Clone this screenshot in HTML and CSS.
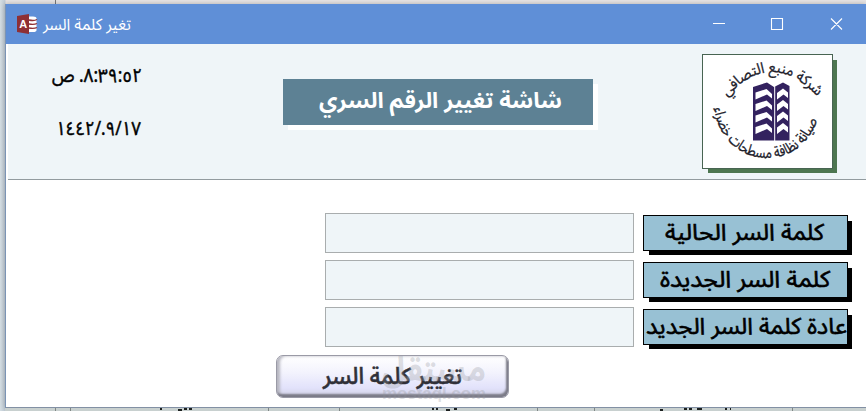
FILE: index.html
```
<!DOCTYPE html>
<html lang="ar">
<head>
    <meta charset="UTF-8">
    <meta name="viewport" content="width=device-width, initial-scale=1.0">
    <title>تغير كلمة السر</title>
    <link rel="stylesheet" href="styles.css">
</head>
<body>
    <div class="window">
        <div class="titlebar">
            <svg class="app-icon" width="20" height="20" viewBox="0 0 20 20">
                <path d="M0 2L12 0V20L0 18Z" fill="#8e3035"/>
                <text x="2.2" y="14" class="app-letter">A</text>
                <path d="M12 2.500H16Q19.500 2.500 19.500 4.500V16Q19.500 18 16 18H12Z" fill="#fff"/>
                <path d="M12 6Q17 7.200 20 5.500M12 10Q17 11 20 9.500M12 14Q17 15 20 13.500" fill="none" stroke="#8e3035" stroke-width="1.300"/>
            </svg>
            <svg class="title" width="90" height="32"><text x="0" y="22" textLength="88" lengthAdjust="spacingAndGlyphs">تغير كلمة السر</text></svg>
            <svg class="controls" width="134" height="16" viewBox="0 0 134 16">
                <path d="M1 7.500H13M59.500 2.500H70.500V13.500H59.500ZM119 2.500L130 13.500M130 2.500L119 13.500" fill="none" stroke="#fff" stroke-width="1.100"/>
            </svg>
        </div>
        <div class="header">
            <div class="clock">
                <svg width="100" height="34"><text x="1" y="21" textLength="90" lengthAdjust="spacingAndGlyphs">ص .٨:٣٩:٥٢</text></svg>
                <svg width="100" height="34"><text x="5" y="21" textLength="85" lengthAdjust="spacingAndGlyphs">١٤٤٢/.٩/١٧</text></svg>
            </div>
            <div class="banner">
                <svg width="310" height="46"><text x="36" y="29" textLength="243" lengthAdjust="spacingAndGlyphs">شاشة تغيير الرقم السري</text></svg>
            </div>
            <div class="logo">
                <svg width="129" height="113" viewBox="703 55 129 113">
                    <path id="top-arc" d="M727 97Q770 48 816 95" fill="none"/>
                    <path id="bottom-arc" d="M714 108C724 175 812 175 820 106" fill="none"/>
                    <text class="logo-text"><textPath href="#top-arc" textLength="106" lengthAdjust="spacingAndGlyphs">شركة منبع التصافي</textPath></text>
                    <text class="logo-text"><textPath href="#bottom-arc" textLength="147" lengthAdjust="spacingAndGlyphs">صيانة نظافة مسطحات خضراء</textPath></text>
                    <path d="M753 87L767 82.500L774 87L783 82.500L789.500 86V140.500H753Z" fill="#33225f"/>
                    <g fill="#fff">
                        <path id="pane" d="M755.500 92.500L766.500 89L772 94V98.500L767 94.500L755.500 99.500Z"/>
                        <use href="#pane" y="11.500"/><use href="#pane" y="23"/><use href="#pane" y="34.500"/>
                        <path id="side" d="M777 93L783 88.500L788 92.500V98L783.500 94.500L777 99.500Z"/>
                        <use href="#side" y="11.500"/><use href="#side" y="23"/><use href="#side" y="34.500"/>
                    </g>
                    <path d="M774.700 86V141" stroke="#fff"/>
                </svg>
            </div>
        </div>
        <div class="form">
            <div class="row">
                <input class="field" type="password">
                <div class="label"><svg width="203" height="34"><text x="21" y="24" textLength="159" lengthAdjust="spacingAndGlyphs">كلمة السر الحالية</text></svg></div>
            </div>
            <div class="row">
                <input class="field" type="password">
                <div class="label"><svg width="203" height="34"><text x="16" y="24" textLength="170" lengthAdjust="spacingAndGlyphs">كلمة السر الجديدة</text></svg></div>
            </div>
            <div class="row">
                <input class="field" type="password">
                <div class="label"><svg width="203" height="34"><text x="2" y="24" textLength="201" lengthAdjust="spacingAndGlyphs">عادة كلمة السر الجديد</text></svg></div>
            </div>
            <button class="submit">
                <svg width="231" height="41"><text x="46" y="28" textLength="139" lengthAdjust="spacingAndGlyphs">تغيير كلمة السر</text></svg>
                <svg class="watermark" width="110" height="46">
                    <text x="2" y="25" class="mark" textLength="104" lengthAdjust="spacingAndGlyphs">مستقل</text>
                    <text x="2" y="43" class="site" textLength="104" lengthAdjust="spacingAndGlyphs">mostaql.com</text>
                </svg>
            </button>
        </div>
    </div>
    <!-- table of the form underneath, only its edge shows -->
    <svg class="behind" width="861" height="3">
        <path d="M50.500 0V3M65.500 0V3M263.500 0V3M334.500 0V3M532.500 0V3M589.500 0V3M787.500 0V3" stroke="#808785"/>
        <path d="M155 1H157M173 2H177M179 1H182M184 1H187M427 1H429M431 1H433M441 2H445M449 1H452M655 2H658M679 1H682M684 1H687M692 1H697M720 1H722M725 1H726" stroke="#1c201f" stroke-width="2"/>
    </svg>
</body>
</html>
```
FILE: styles.css
```
* {
    box-sizing: border-box;
}
body {
    margin: 0;
    height: 411px;
    padding: 4px 0 0 5px;
    overflow: hidden;
    background: linear-gradient(90deg, #d5dee3, #c0cbd5 5px, #e7e4e4 6px, #e7e4e4 55px, #777 55px, #777 56px, #e7e4e4 56px);
    font-family: "Noto Sans Arabic", "Segoe UI", "DejaVu Sans", sans-serif;
}
svg {
    display: block;
    overflow: visible;
}
.window {
    height: 404px;
    background: #fff;
    border-left: 1px solid #7b94b5;
    border-bottom: 1px solid #8290a4;
    box-shadow: 0 0 5px rgba(0, 0, 0, 0.25);
}
.titlebar {
    display: flex;
    align-items: center;
    height: 40px;
    padding: 0 20px 0 11px;
    background: #5f8fd7;
}
.app-letter {
    font: bold 11px "Liberation Sans", sans-serif;
    fill: #fff;
}
.title {
    margin-left: 6px;
    font-size: 16px;
    fill: #fff;
}
.controls {
    margin-left: auto;
}
.header {
    display: flex;
    align-items: flex-start;
    height: 136px;
    margin-left: 2px;
    background: #eff5f8;
    border-bottom: 1px solid #929b9f;
}
.clock {
    display: flex;
    flex-direction: column;
    gap: 19px;
    width: 100px;
    margin: 17px 0 0 43px;
    font-size: 19px;
    stroke: #000;
    stroke-width: 0.5px;
}
.clock text {
    direction: ltr;
    unicode-bidi: bidi-override;
}
.banner {
    width: 310px;
    height: 46px;
    margin: 35px 0 0 132px;
    background: #5d8194;
    fill: #fff;
    font-size: 22px;
    font-weight: bold;
    box-shadow: 5px 5px #fff;
}
.logo {
    width: 131px;
    height: 115px;
    margin: 10px 0 0 109px;
    background: #fff;
    border: 1px solid #486452;
    box-shadow: 5px 5px 0 -1px #4d7650;
}
.logo-text {
    font-size: 15px;
    fill: #20202a;
    stroke: #20202a;
    stroke-width: 0.3px;
}
.form {
    display: flex;
    flex-direction: column;
    gap: 7px;
    padding: 33px 0 0 319px;
}
.row {
    display: flex;
    gap: 9px;
}
.field {
    width: 309px;
    height: 40px;
    background: #eff5f8;
    border: 1px solid #a9adae;
}
.label {
    width: 205px;
    height: 36px;
    margin-top: 2px;
    background: #98c1d4;
    border: 1px solid #000;
    box-shadow: 5px 5px 0 -1px #000;
    font-size: 23px;
    stroke: #000;
    stroke-width: 0.6px;
}
.submit {
    position: relative;
    width: 233px;
    height: 43px;
    margin: 1px 0 0 -49px;
    padding: 0;
    border: 1px solid #9a9aa6;
    border-radius: 7px;
    background: linear-gradient(#fff, #f3f3fd 40%, #e2e2fb 78%, #d0d0e2);
    box-shadow: inset -2px -3px 2px #7b7b87, inset 3px 0 3px #b6b6c0;
    font-family: inherit;
    font-size: 23px;
    font-weight: 500;
    fill: #303038;
    stroke: #303038;
    stroke-width: 0.5px;
}
.watermark {
    position: absolute;
    left: 103px;
    top: 0;
    fill: rgba(145, 148, 155, 0.3);
    stroke: none;
}
.mark {
    font-size: 34px;
    font-weight: bold;
}
.site {
    font: bold 17px "Liberation Sans", sans-serif;
}
.behind {
    background: #c8d0cf;
}
```
